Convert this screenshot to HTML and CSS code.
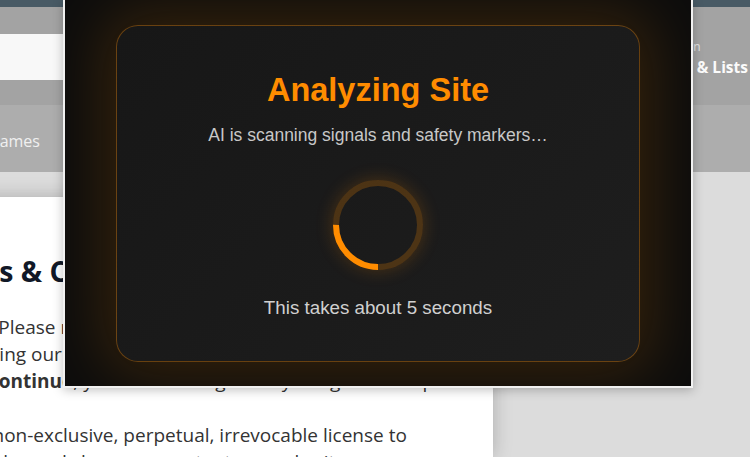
FILE: index.html
```html
<!DOCTYPE html>
<html lang="en">
<head>
    <meta charset="UTF-8" />
    <meta name="viewport" content="width=device-width, initial-scale=1.0" />
    <title>Terms &amp; Conditions</title>
    <link rel="stylesheet" href="styles.css">
</head>
<body>
    <div class="page">
        <div class="topbar"></div>
        <header class="header">
            <div class="search"></div>
            <div class="account">
                <span class="hello">Hello, sign in</span>
                <span class="lists">Account &amp; Lists</span>
            </div>
        </header>
        <nav class="nav">
            <a href="#">Games</a>
            <a href="#">Deals</a>
            <a href="#">Music</a>
        </nav>
        <main class="main">
            <article class="terms">
                <h1>Terms &amp; Conditions</h1>
                <p>Thanks! Please read these terms carefully<br>
                when using our service. By<br>
                hitting <b>Continue</b>, you acknowledge that you agree to all policies</p>
                <p>grant a non-exclusive, perpetual, irrevocable license to<br>
                use, display and share any content you submit.</p>
            </article>
        </main>
    </div>

    <div class="popup">
        <div class="card">
            <h2 class="title">Analyzing Site</h2>
            <p class="subtitle">AI is scanning signals and safety markers…</p>
            <div class="spinner">
                <svg width="90" height="90" viewBox="0 0 90 90">
                    <circle class="track" cx="45" cy="45" r="42"></circle>
                    <circle class="arc" cx="45" cy="45" r="42" transform="rotate(90 45 45)"></circle>
                </svg>
            </div>
            <p class="note">This takes about 5 seconds</p>
        </div>
    </div>
</body>
</html>
```

FILE: styles.css
```css
body {
    margin: 0;
    padding: 0;
    width: 750px;
    height: 457px;
    overflow: hidden;
    font-family: "Open Sans", "Liberation Sans", sans-serif;
    background: #dcdcdc;
}
.page {
    height: 457px;
    display: flex;
    flex-direction: column;
}
.topbar {
    flex-shrink: 0;
    height: 7px;
    background: #485a65;
}
.header {
    flex-shrink: 0;
    height: 98px;
    display: flex;
    align-items: flex-start;
    background: #a3a3a3;
}
.search {
    width: 600px;
    height: 46px;
    margin-top: 27px;
    margin-left: -10px;
    background: #f8f8f8;
}
.account {
    display: flex;
    flex-direction: column;
    margin-left: auto;
    margin-top: 31px;
    padding-right: 2px;
}
.hello {
    font-size: 12px;
    line-height: 18px;
    color: #e4e4e4;
}
.lists {
    font-size: 15.5px;
    line-height: 22px;
    font-weight: 700;
    color: #fbfbfb;
}
.nav {
    flex-shrink: 0;
    height: 67px;
    display: flex;
    align-items: center;
    gap: 28px;
    padding-top: 4px;
    box-sizing: border-box;
    background: #adadad;
}
.nav a {
    font-size: 16px;
    color: #f0f0f0;
    text-decoration: none;
}
.nav a:first-child {
    margin-left: -12px;
}
.main {
    flex: 1;
    min-height: 0;
    padding-top: 25px;
    background: #dcdcdc;
}
.terms {
    width: 593px;
    height: 100%;
    box-sizing: border-box;
    margin-left: -100px;
    padding: 56px 0 0 25px;
    overflow: hidden;
    background: #ffffff;
    box-shadow: 0 0 18px rgba(0, 0, 0, 0.22);
}
.terms h1 {
    margin: 0 0 25px;
    font-size: 28.5px;
    line-height: 36px;
    font-weight: 700;
    color: #111827;
    white-space: nowrap;
}
.terms p {
    margin: 0 0 27px;
    font-size: 19px;
    line-height: 27px;
    color: #333333;
    white-space: nowrap;
}

/* analyzing popup */
.popup {
    position: absolute;
    left: 63px;
    top: 0;
    width: 630px;
    box-sizing: border-box;
    padding: 25px 51px 24px;
    background: #0d0d0d;
    border: 2px solid #f1f1f1;
    border-top: none;
    box-shadow: 0 2px 10px rgba(0, 0, 0, 0.25);
    overflow: hidden;
}
.card {
    height: 337px;
    box-sizing: border-box;
    display: flex;
    flex-direction: column;
    align-items: center;
    padding-top: 45px;
    border: 1px solid rgba(255, 140, 0, 0.35);
    border-radius: 22px;
    background: linear-gradient(135deg, #171717, #1e1e1e);
    box-shadow: 0 0 60px 14px rgba(255, 140, 0, 0.16);
    font-family: "Liberation Sans", Arial, sans-serif;
}
.title {
    margin: 0;
    font-size: 32.5px;
    line-height: 38px;
    font-weight: 700;
    color: #ff8c00;
}
.subtitle {
    margin: 16px 0 0;
    font-size: 17.5px;
    line-height: 20px;
    color: #c8c8c8;
}
.spinner {
    width: 90px;
    height: 90px;
    margin-top: 35px;
    border-radius: 50%;
    box-shadow: 0 0 18px rgba(255, 140, 0, 0.22);
}
.spinner svg {
    display: block;
}
.spinner circle {
    fill: none;
    stroke-width: 6;
}
.spinner .track {
    stroke: rgba(255, 140, 0, 0.22);
}
.spinner .arc {
    stroke: #ff8c00;
    stroke-dasharray: 66 264;
}
.note {
    margin: 27px 0 0;
    font-size: 18.75px;
    line-height: 22px;
    color: #d0d0d0;
}
```
